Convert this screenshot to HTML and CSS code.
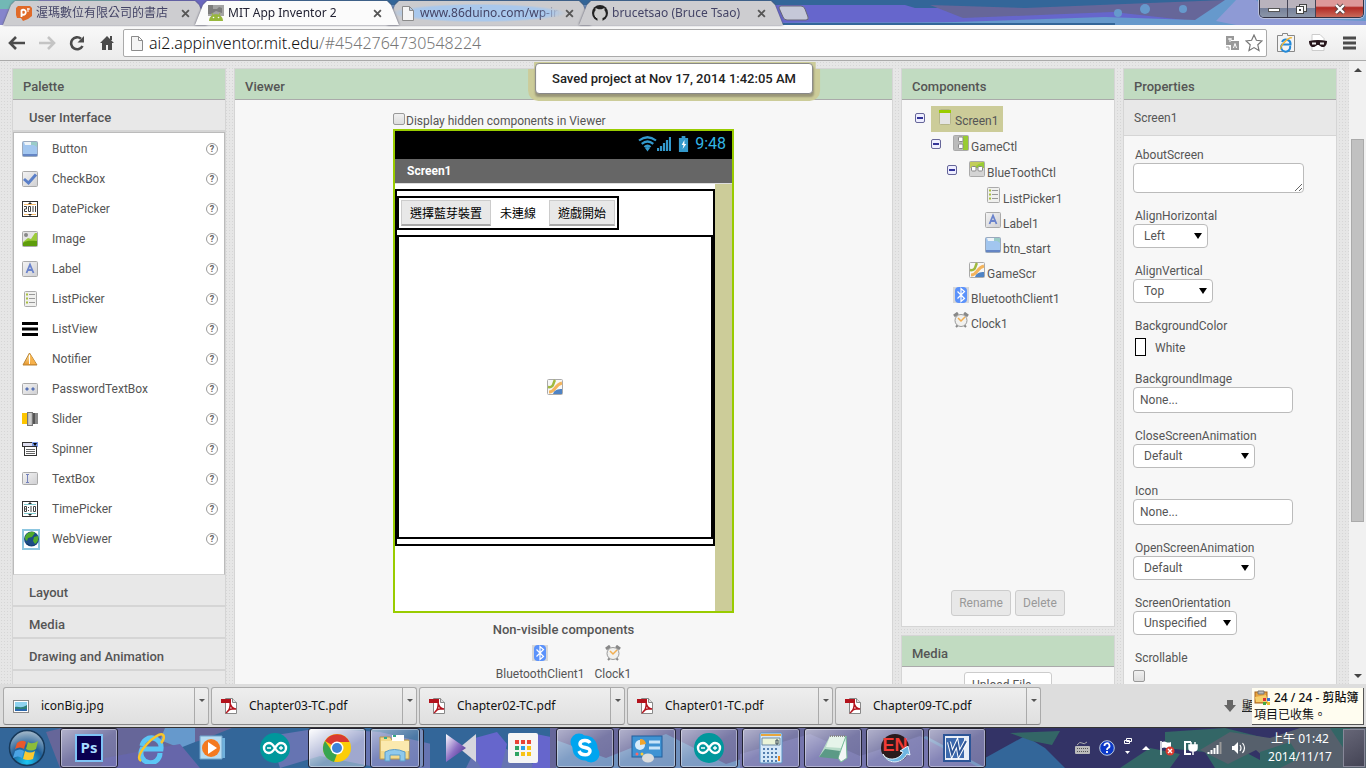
FILE: index.html
```html
<!DOCTYPE html>
<html lang="en">
<head>
<meta charset="utf-8">
<title>MIT App Inventor 2</title>
<link rel="stylesheet" href="styles.css">
</head>
<body>
<svg class="sprite" aria-hidden="true">
  <defs>
    <linearGradient id="gGrey" x1="0" y1="0" x2="1" y2="1"><stop offset="0" stop-color="#f4f4f4"/><stop offset="1" stop-color="#cfcfd2"/></linearGradient>
    <linearGradient id="gOrange" x1="0" y1="0" x2="0" y2="1"><stop offset="0" stop-color="#fff0b0"/><stop offset="1" stop-color="#e9962a"/></linearGradient>
    <radialGradient id="gOrb" cx=".5" cy=".9" r=".9"><stop offset="0" stop-color="#19c8f5"/><stop offset=".5" stop-color="#1f5f99"/><stop offset="1" stop-color="#a9bccb"/></radialGradient>
    <linearGradient id="gVs" x1="0" y1="0" x2="1" y2="1"><stop offset="0" stop-color="#fff"/><stop offset=".5" stop-color="#8c6fc4"/><stop offset="1" stop-color="#3a2080"/></linearGradient>
  </defs>
  <symbol id="i-button" viewBox="0 0 16 16"><rect x=".5" y=".5" width="15" height="15" rx="1" fill="#a2c6ef" stroke="#9aa9bd"/><path d="M9 1h6v5l-3-2H9z" fill="#9accc8"/><path d="M2 1h7v3H3z" fill="#eef4f8"/><path d="M1 14h14" stroke="#6485c4" stroke-width="2"/></symbol>
  <symbol id="i-check" viewBox="0 0 16 16"><rect x=".5" y=".5" width="15" height="15" rx="1" fill="url(#gGrey)" stroke="#aaa"/><path d="M2 8l4.500 4L14 3.500" fill="none" stroke="#5a7fc8" stroke-width="3"/></symbol>
  <symbol id="i-date" viewBox="0 0 16 16"><rect x=".5" y=".5" width="15" height="15" fill="#fff" stroke="#333"/><path d="M2 3.500h12M2 13.500h12" stroke="#f2b86a"/><path d="M6 3l2-2 2 2zM6 13l2 2 2-2z" fill="#222"/><path d="M2 5.500h2.500v2.500H2.500v2.500H5M6.500 5.500h2v5h-2zM11 5v6M13.500 5v6" fill="none" stroke="#444"/></symbol>
  <symbol id="i-image" viewBox="0 0 16 16"><rect x=".5" y=".5" width="15" height="15" rx="1" fill="#e4e4e4" stroke="#aaa"/><circle cx="4" cy="4" r="2" fill="#888"/><path d="M1 11L6 7l3 1 4-6h2v13H1z" fill="#9ccb3b"/><path d="M1 12c4-3 8-2 14-2v5H1z" fill="#5e9d0c"/></symbol>
  <symbol id="i-label" viewBox="0 0 16 16"><rect x=".5" y=".5" width="15" height="15" rx="1" fill="url(#gGrey)" stroke="#aaa"/><path d="M4.500 12L8 3.500 11.500 12M5.500 9h5" fill="none" stroke="#6a83cc" stroke-width="1.800"/></symbol>
  <symbol id="i-list" viewBox="0 0 16 16"><rect x="2.500" y=".5" width="12" height="15" rx="1" fill="#f0f0ee" stroke="#aaa"/><path d="M7 3.500h6M7 7.500h6M7 11.500h6" stroke="#999"/><path d="M4 3.500h2M4 7.500h2M4 11.500h2" stroke="#a9c040" stroke-width="2"/></symbol>
  <symbol id="i-listview" viewBox="0 0 16 16"><path d="M0 2.500h16M0 8h16M0 13.500h16" stroke="#000" stroke-width="3"/></symbol>
  <symbol id="i-notifier" viewBox="0 0 16 16"><path d="M7.500 2L15 14H1z" fill="url(#gOrange)" stroke="#b98336"/><path d="M7.500 4v9" stroke="#fff" stroke-width="1"/><path d="M8 3l6 10H9z" fill="#f7b24b"/></symbol>
  <symbol id="i-password" viewBox="0 0 16 16"><rect x=".5" y="2.500" width="15" height="11" rx="1" fill="url(#gGrey)" stroke="#aaa"/><path d="M3 8h4M5 6v4M9 8h4M11 6v4M4 7l2 2M6 7l-2 2M10 7l2 2M12 7l-2 2" stroke="#5973b5"/></symbol>
  <symbol id="i-slider" viewBox="0 0 16 16"><path d="M0 2h6v11H0z" fill="#fdc500"/><path d="M10 2h6v11h-6z" fill="#555"/><path d="M13 2h3v11h-3z" fill="#888"/><rect x="5.500" y="1.500" width="5" height="13" fill="#bbb" stroke="#777"/><path d="M8 2v12" stroke="#ddd"/></symbol>
  <symbol id="i-spinner" viewBox="0 0 16 16"><rect x=".5" y="1.500" width="15" height="4" fill="#dde" stroke="#333"/><path d="M10 1h6v5h-6z" fill="#7b9be8"/><path d="M11 2h4l-2 3z" fill="#000"/><rect x="2.500" y="5.500" width="12" height="9" fill="#fff" stroke="#333"/><path d="M4 8.500h9M4 10.500h9M4 12.500h9" stroke="#666"/></symbol>
  <symbol id="i-textbox" viewBox="0 0 16 16"><rect x=".5" y="1.500" width="15" height="12" rx="1" fill="url(#gGrey)" stroke="#aaa"/><path d="M4 3.500h3M4 11.500h3M5.500 3.500v8" stroke="#7582bb"/></symbol>
  <symbol id="i-time" viewBox="0 0 16 16"><rect x=".5" y=".5" width="15" height="15" fill="#fff" stroke="#333"/><path d="M2 3.500h12M2 12.500h12" stroke="#7fc8cc"/><path d="M6 3l2-2 2 2zM6 13l2 2 2-2z" fill="#222"/><path d="M2.500 5.500h2v5h-2zM2.500 8h2M6.500 6v1M6.500 9v1M9 5v6M11.500 5.500h2v5h-2z" fill="none" stroke="#444"/></symbol>
  <symbol id="i-web" viewBox="0 0 18 21"><rect x="1" y="1" width="16" height="19" fill="#fff" stroke="#8cc6e0" stroke-width="2"/><circle cx="9.500" cy="10" r="7.500" fill="#1b4c86"/><path d="M4 6c3-4 8-4 9-2l-3 4-4 1-1 3c-3-2-2-4-1-6zM12 8l4-1c1 4-1 7-3 8l-2-3z" fill="#4faa2c"/><path d="M4 14c3 4 9 4 12-2-1 3-4 5-7 5z" fill="#0c1f3a"/></symbol>
  <symbol id="i-screen" viewBox="0 0 16 16"><rect x="2.500" y=".5" width="11" height="15" rx="1" fill="#e4e4e4" stroke="#b5b58a"/><path d="M2 2.500h12" stroke="#9c0" stroke-width="3"/></symbol>
  <symbol id="i-vert" viewBox="0 0 16 16"><rect x=".5" y=".5" width="15" height="15" rx="1" fill="#bbb" stroke="#aaa"/><path d="M10 1h5v14h-5z" fill="#9c3"/><rect x="5.500" y="2" width="4.500" height="4.500" rx="1" fill="#fff" stroke="#888"/><rect x="5.500" y="9" width="4.500" height="4.500" rx="1" fill="#fff" stroke="#888"/></symbol>
  <symbol id="i-horiz" viewBox="0 0 16 16"><rect x=".5" y=".5" width="15" height="15" rx="1" fill="#d4d4d4" stroke="#aaa"/><path d="M1 1h14v6H1z" fill="#c3cd5a"/><path d="M5 7c2-3 6-5 10-6v6z" fill="#9c3"/><rect x="2.500" y="5.500" width="4.500" height="4.500" rx="1" fill="#fff" stroke="#888"/><rect x="9" y="5.500" width="4.500" height="4.500" rx="1" fill="#fff" stroke="#888"/></symbol>
  <symbol id="i-canvas" viewBox="0 0 16 16"><rect x=".5" y=".5" width="15" height="15" rx="1" fill="#f7f7f7" stroke="#aaa"/><path d="M1 8c6 1 5-4 7-7" fill="none" stroke="#9fb93e" stroke-width="2.500"/><path d="M2 13c7 0 5-7 13-9" fill="none" stroke="#f4b45c" stroke-width="3"/><path d="M6 15c1-4 5-5 9-5v5z" fill="#4f83c4"/></symbol>
  <symbol id="i-bt" viewBox="0 0 16 16"><path d="M0 0h16v16H0z" fill="#d8d8d8"/><rect x="2" y="0" width="12" height="16" rx="4" fill="#5b92fb"/><path d="M4.500 4.500l7 7L8 14.500v-13l3.500 3-7 7" fill="none" stroke="#fff" stroke-width="1.200"/></symbol>
  <symbol id="i-clock" viewBox="0 0 16 16"><path d="M1 4l4-3M11 1l4 3" stroke="#888" stroke-width="3"/><path d="M3 15l2-2M13 15l-2-2" stroke="#888" stroke-width="2"/><circle cx="8" cy="8.500" r="6" fill="#f1f1ef" stroke="#999"/><path d="M5 6l3 3 4-4" fill="none" stroke="#f2ae51" stroke-width="1.500"/></symbol>
  <symbol id="i-page" viewBox="0 0 12 16"><path d="M.5 1.500h7l4 4v10H.5zM7.500 1.500v4h4" fill="#f4f4f4" stroke="#8b8b8b"/></symbol>
  <symbol id="i-close" viewBox="0 0 8 8"><path d="M1 1l6 6M7 1L1 7" stroke="#555" stroke-width="1.600"/></symbol>
  <symbol id="i-pdf" viewBox="0 0 16 16"><path d="M4.500.5h7l4 4v11h-11z" fill="#fff" stroke="#888"/><path d="M11.500.5v4h4" fill="#ddd" stroke="#888"/><path d="M0 1h10v4H0z" fill="#b3121c"/><path d="M9 5c1 4 3 6 6 6-4-1-8 1-9 3 2-1 4-6 3-9z" fill="none" stroke="#b3121c" stroke-width="1.500"/></symbol>
  <symbol id="i-jpg" viewBox="0 0 16 16"><rect x=".5" y="2.500" width="15" height="12" fill="#fff" stroke="#888"/><path d="M2 4h12v9H2z" fill="#8fd3ef"/><path d="M2 9c4-1 6 2 12-2v6H2z" fill="#2d7f79"/><path d="M2 11h12v2H2z" fill="#2a67ad"/></symbol>
  <symbol id="i-arduino" viewBox="0 0 30 30"><circle cx="15" cy="15" r="15" fill="#00979c"/><path d="M15 15c-2-3.500-4-5-6-5a5 5 0 0 0 0 10c2 0 4-1.500 6-5c2-3.500 4-5 6-5a5 5 0 0 1 0 10c-2 0-4-1.500-6-5z" fill="none" stroke="#fff" stroke-width="2.400"/><path d="M7 15h4M19 15h4M21 13v4" stroke="#fff" stroke-width="1.300"/></symbol>
</svg>

<header class="tabstrip">
  <svg class="mosaic" viewBox="0 0 1366 25" preserveAspectRatio="none" aria-hidden="true">
    <path d="M0 0h1366v25H0z" fill="#369"/><path d="M0 0h200v25H0z" fill="#8685cc"/><path d="M0 0h40l-20 9H0zM70 0h50l30 8H80z" fill="#72b8b5"/><path d="M130 0h110v25H130z" fill="#6a67c0"/><path d="M380 5h210l20 20H390z" fill="#6b92c6"/>
    <path d="M775 5h130l10 3h330v17H775z" fill="#66c"/><path d="M930 5l95 3 200-8 18 16-40 6-90-10-150 6z" fill="#669"/><path d="M775 23c50-1 100 0 180-1l150-5 90 3 30-20h141v25H775z" fill="#69c"/><path d="M1236 0h20l20 18 90 3v4h-130l-20-4z" fill="#8e9ad5"/><path d="M775 23h340v2H775z" fill="#369"/><circle cx="1118" cy="13" r="4" fill="#69c"/><circle cx="1145" cy="9" r="5" fill="#69c"/><circle cx="1183" cy="9" r="4" fill="#69c"/>
  </svg>
  <nav class="tabs" aria-label="Tabs">
    <div class="tab">
      <svg class="ic16" viewBox="0 0 16 16"><path d="M2 1h12l2 2v8l-4 3-5 2-2-3H1L0 10V3z" fill="#e06a28"/><path d="M5.500 12V5.500a2.500 2.500 0 110 3.500" fill="none" stroke="#fff" stroke-width="1.800"/><path d="M12 3v4M11 4h3" stroke="#fff"/></svg>
      <span class="tab-title">渥瑪數位有限公司的書店</span>
      <button class="tab-close" aria-label="Close tab"><svg class="ic8"><use href="#i-close"/></svg></button>
    </div>
    <div class="tab active">
      <svg class="ic16" viewBox="0 0 16 16"><path d="M0 0h16v11H0z" fill="#a4a4a4"/><path d="M0 0h5v4h4l2-2 3 1v5L8 6 3 9H0z" fill="#7d7d7d"/><path d="M1 16c0-9 14-9 14 0z" fill="#97b73c"/><path d="M4 8l1 2M12 8l-1 2" stroke="#97b73c"/><circle cx="5.500" cy="12.500" r=".8" fill="#fff"/><circle cx="10.500" cy="12.500" r=".8" fill="#fff"/></svg>
      <span class="tab-title">MIT App Inventor 2</span>
      <button class="tab-close" aria-label="Close tab"><svg class="ic8"><use href="#i-close"/></svg></button>
    </div>
    <div class="tab glass">
      <svg class="ic16"><use href="#i-page"/></svg>
      <span class="tab-title">www.86duino.com/wp-in</span>
      <button class="tab-close" aria-label="Close tab"><svg class="ic8"><use href="#i-close"/></svg></button>
    </div>
    <div class="tab">
      <svg class="ic16" viewBox="0 0 16 16"><circle cx="8" cy="8" r="8" fill="#222"/><path d="M5.500 16v-3c-4-1-4-6-2-7.500L3.500 3l3 1.200h3L12.500 3v2.500c2 2 2 6.500-2 7.500v3z" fill="#ccc"/><path d="M3 11l2.500 2.500" stroke="#ccc"/></svg>
      <span class="tab-title">brucetsao (Bruce Tsao)</span>
      <button class="tab-close" aria-label="Close tab"><svg class="ic8"><use href="#i-close"/></svg></button>
    </div>
    <button class="newtab" aria-label="New tab"><svg viewBox="0 0 32 16" width="32" height="16"><path d="M3 1h20q3 0 4 3l3 8q1 3-2 3H9q-3 0-4-3L1 3q0-2 2-2z" fill="#c5c8d8" stroke="#667"/></svg></button>
  </nav>
  <div class="winbtns">
    <button class="wb" aria-label="Minimize"><svg width="14" height="10" viewBox="0 0 14 10"><rect x="1.500" y="4.500" width="11" height="3" fill="#fff" stroke="#555"/></svg></button>
    <button class="wb" aria-label="Restore"><svg width="14" height="12" viewBox="0 0 14 12"><rect x="4.500" y="1.500" width="7" height="7" fill="#eee" stroke="#444"/><rect x="1.500" y="3.500" width="7" height="7" fill="#fff" stroke="#444"/><rect x="4" y="6" width="2" height="2" fill="#444"/></svg></button>
    <button class="wb wb-close" aria-label="Close"><svg width="14" height="12" viewBox="0 0 14 12"><path d="M3 2l8 8M11 2l-8 8" stroke="#544" stroke-width="4"/><path d="M3 2l8 8M11 2l-8 8" stroke="#fff" stroke-width="2.400"/></svg></button>
  </div>
</header>

<div class="toolbar">
  <button class="tool" aria-label="Back"><svg width="18" height="16" viewBox="0 0 18 16"><path d="M2 8h15M8 2L2 8l6 6" fill="none" stroke="#4b4b4b" stroke-width="2.600"/></svg></button>
  <button class="tool" aria-label="Forward"><svg width="18" height="16" viewBox="0 0 18 16"><path d="M1 8h15M10 2l6 6-6 6" fill="none" stroke="#c4c4c4" stroke-width="2.600"/></svg></button>
  <button class="tool" aria-label="Reload"><svg width="18" height="16" viewBox="0 0 18 16"><path d="M14.500 11A6 6 0 1113 3.700" fill="none" stroke="#4b4b4b" stroke-width="2.600"/><path d="M16 1v6.500H9.500z" fill="#4b4b4b"/></svg></button>
  <button class="tool" aria-label="Home"><svg width="18" height="16" viewBox="0 0 18 16"><path d="M9 1l7 7h-2v7h-4v-5H8v5H4V8H2zM12 1h2v4h-2z" fill="#4b4b4b"/></svg></button>
  <div class="omnibox">
    <svg class="pageic"><use href="#i-page"/></svg>
    <span class="url">ai2.appinventor.mit.edu<span class="path">/#4542764730548224</span></span>
    <svg width="14" height="14" viewBox="0 0 14 14"><path d="M1 0h8v4H6v5H1zM6 5h8v9H6z" fill="#999"/><path d="M3 3h4M5 2v4M8.500 12L10 7.500 11.500 12" fill="none" stroke="#fff"/><path d="M1 11h3v3" fill="none" stroke="#999"/></svg>
    <button class="star" aria-label="Bookmark"><svg width="18" height="18" viewBox="0 0 18 18"><path d="M9 1l2.400 5.300 5.600.600-4.200 3.900 1.200 5.700-5-2.900-5 2.900 1.200-5.700L1 6.900l5.600-.6z" fill="#fff" stroke="#777" stroke-width="1.200"/></svg></button>
  </div>
  <button class="ext" aria-label="IE Tab"><svg width="20" height="20" viewBox="0 0 20 20"><path d="M1.500 2.500h5v-2h5v2h7v16h-17z" fill="#f4f4f4" stroke="#888"/><path d="M14 13A4.500 4.500 0 116 11.500h8.500A4.500 4.500 0 006 9" fill="none" stroke="#2289d8" stroke-width="2"/><path d="M5 16C3 14 13 3 16 5" fill="none" stroke="#f2b632" stroke-width="1.400"/></svg></button>
  <button class="ext" aria-label="Mask"><svg width="20" height="20" viewBox="0 0 20 20"><path d="M4 1.500h8l4 4v12H4z" fill="#fff" stroke="#ccc"/><path d="M1 8q9-2 18 0c0 4-2 6-4 6-3 0-3-2-5-2s-2 2-5 2c-2 0-4-2-4-6z" fill="#27161c"/><path d="M4 10.500h4M12 10.500h4" stroke="#eee" stroke-width="1.800"/></svg></button>
  <button class="ext" aria-label="Menu"><svg width="14" height="14" viewBox="0 0 14 14"><path d="M0 2h13M0 7h13M0 12h13" stroke="#4b4b4b" stroke-width="3"/></svg></button>
</div>

<div class="page">
  <main class="columns">
    <section class="panel">
      <h2 class="panel-head">Palette</h2>
      <h3 class="cat">User Interface</h3>
      <ul class="items">
        <li><svg class="ic16"><use href="#i-button"/></svg><span>Button</span><button class="help" aria-label="Help">?</button></li>
        <li><svg class="ic16"><use href="#i-check"/></svg><span>CheckBox</span><button class="help" aria-label="Help">?</button></li>
        <li><svg class="ic16"><use href="#i-date"/></svg><span>DatePicker</span><button class="help" aria-label="Help">?</button></li>
        <li><svg class="ic16"><use href="#i-image"/></svg><span>Image</span><button class="help" aria-label="Help">?</button></li>
        <li><svg class="ic16"><use href="#i-label"/></svg><span>Label</span><button class="help" aria-label="Help">?</button></li>
        <li><svg class="ic16"><use href="#i-list"/></svg><span>ListPicker</span><button class="help" aria-label="Help">?</button></li>
        <li><svg class="ic16"><use href="#i-listview"/></svg><span>ListView</span><button class="help" aria-label="Help">?</button></li>
        <li><svg class="ic16"><use href="#i-notifier"/></svg><span>Notifier</span><button class="help" aria-label="Help">?</button></li>
        <li><svg class="ic16"><use href="#i-password"/></svg><span>PasswordTextBox</span><button class="help" aria-label="Help">?</button></li>
        <li><svg class="ic16"><use href="#i-slider"/></svg><span>Slider</span><button class="help" aria-label="Help">?</button></li>
        <li><svg class="ic16"><use href="#i-spinner"/></svg><span>Spinner</span><button class="help" aria-label="Help">?</button></li>
        <li><svg class="ic16"><use href="#i-textbox"/></svg><span>TextBox</span><button class="help" aria-label="Help">?</button></li>
        <li><svg class="ic16"><use href="#i-time"/></svg><span>TimePicker</span><button class="help" aria-label="Help">?</button></li>
        <li><svg class="webic"><use href="#i-web"/></svg><span>WebViewer</span><button class="help" aria-label="Help">?</button></li>
      </ul>
      <h3 class="cat">Layout</h3>
      <h3 class="cat">Media</h3>
      <h3 class="cat">Drawing and Animation</h3>
      <h3 class="cat">Sensors</h3>
    </section>

    <section class="panel">
      <h2 class="panel-head">Viewer</h2>
      <div class="viewer">
        <div class="device">
          <label class="hidden-opt"><input type="checkbox" class="tick">Display hidden components in Viewer</label>
          <div class="phone">
            <div class="status">
              <svg width="19" height="16" viewBox="0 0 19 16"><path d="M1 4.500q8.500-6.500 17 0M3.700 7.800q5.800-4.600 11.600 0M6.400 11q3.100-2.500 6.200 0" fill="none" stroke="#3399cc" stroke-width="2.200"/><path d="M7 12q2.500-2 5 0l-2.500 3.500z" fill="#39c"/></svg>
              <svg width="14" height="16" viewBox="0 0 14 16"><path d="M1 15v-3M4 15v-5M7 15V7M10 15V4M13 15V1" stroke="#39c" stroke-width="2.200"/></svg>
              <svg class="battery" width="11" height="16" viewBox="0 0 12 16" preserveAspectRatio="none"><path d="M1 2h3V0h4v2h3v14H1z" fill="#39c"/><path d="M7 4L4 9h2l-1 4 4-5H7z" fill="#fff"/></svg>
              <span>9:48</span>
            </div>
            <div class="apptitle">Screen1</div>
            <div class="screen">
              <div class="gamectl">
                <div class="btctl">
                  <button class="mock">選擇藍芽裝置</button>
                  <span class="mocklabel">未連線</span>
                  <button class="mock">遊戲開始</button>
                </div>
                <div class="gamescr"><svg class="ic16"><use href="#i-canvas"/></svg></div>
              </div>
              <div class="strip"></div>
            </div>
          </div>
        </div>
        <h3 class="nonvis">Non-visible components</h3>
        <div class="nonvis-list">
          <figure><svg class="ic16"><use href="#i-bt"/></svg><figcaption>BluetoothClient1</figcaption></figure>
          <figure><svg class="ic16"><use href="#i-clock"/></svg><figcaption>Clock1</figcaption></figure>
        </div>
      </div>
    </section>

    <div class="stack">
      <section class="panel">
        <h2 class="panel-head">Components</h2>
        <ul class="tree">
          <li><div class="row"><button class="exp" aria-label="Collapse"></button><span class="node sel"><svg class="ic16"><use href="#i-screen"/></svg>Screen1</span></div>
            <ul>
              <li><div class="row"><button class="exp" aria-label="Collapse"></button><span class="node"><svg class="ic16"><use href="#i-vert"/></svg>GameCtl</span></div>
                <ul>
                  <li><div class="row"><button class="exp" aria-label="Collapse"></button><span class="node"><svg class="ic16"><use href="#i-horiz"/></svg>BlueToothCtl</span></div>
                    <ul>
                      <li><div class="row leaf"><span class="node"><svg class="ic16"><use href="#i-list"/></svg>ListPicker1</span></div></li>
                      <li><div class="row leaf"><span class="node"><svg class="ic16"><use href="#i-label"/></svg>Label1</span></div></li>
                      <li><div class="row leaf"><span class="node"><svg class="ic16"><use href="#i-button"/></svg>btn_start</span></div></li>
                    </ul>
                  </li>
                  <li><div class="row leaf"><span class="node"><svg class="ic16"><use href="#i-canvas"/></svg>GameScr</span></div></li>
                </ul>
              </li>
              <li><div class="row leaf"><span class="node"><svg class="ic16"><use href="#i-bt"/></svg>BluetoothClient1</span></div></li>
              <li><div class="row leaf"><span class="node"><svg class="ic16"><use href="#i-clock"/></svg>Clock1</span></div></li>
            </ul>
          </li>
        </ul>
        <div class="actions"><button class="btn" disabled>Rename</button><button class="btn" disabled>Delete</button></div>
      </section>
      <section class="panel">
        <h2 class="panel-head">Media</h2>
        <div class="upload"><button class="btn white">Upload File ...</button></div>
      </section>
    </div>

    <section class="panel">
      <h2 class="panel-head">Properties</h2>
      <div class="target">Screen1</div>
      <form class="props">
        <div class="prop"><label for="about">AboutScreen</label><textarea id="about"></textarea></div>
        <div class="prop"><label for="ah">AlignHorizontal</label><span class="pick w-s"><select id="ah"><option>Left</option></select></span></div>
        <div class="prop"><label for="av">AlignVertical</label><span class="pick w-m"><select id="av"><option>Top</option></select></span></div>
        <div class="prop"><label for="bg">BackgroundColor</label><button type="button" id="bg" class="color"><i></i>White</button></div>
        <div class="prop"><label for="bi">BackgroundImage</label><input id="bi" class="field" type="text" value="None..." readonly></div>
        <div class="prop"><label for="ca">CloseScreenAnimation</label><span class="pick w-xl"><select id="ca"><option>Default</option></select></span></div>
        <div class="prop"><label for="ic">Icon</label><input id="ic" class="field" type="text" value="None..." readonly></div>
        <div class="prop"><label for="oa">OpenScreenAnimation</label><span class="pick w-xl"><select id="oa"><option>Default</option></select></span></div>
        <div class="prop"><label for="so">ScreenOrientation</label><span class="pick w-l"><select id="so"><option>Unspecified</option></select></span></div>
        <div class="prop"><label for="sc">Scrollable</label><input id="sc" type="checkbox" class="tick spaced"></div>
      </form>
    </section>
  </main>
  <div class="scrollbar"><span class="arrow up"></span><span class="before"></span><span class="thumb"></span><span class="after"></span><span class="arrow down"></span></div>
  <div class="toast" role="status">Saved project at Nov 17, 2014 1:42:05 AM</div>
</div>

<div class="downloads">
  <div class="dl"><button class="file"><svg class="ic16"><use href="#i-jpg"/></svg>iconBig.jpg</button><button class="more" aria-label="Options"></button></div>
  <div class="dl"><button class="file"><svg class="ic16"><use href="#i-pdf"/></svg>Chapter03-TC.pdf</button><button class="more" aria-label="Options"></button></div>
  <div class="dl"><button class="file"><svg class="ic16"><use href="#i-pdf"/></svg>Chapter02-TC.pdf</button><button class="more" aria-label="Options"></button></div>
  <div class="dl"><button class="file"><svg class="ic16"><use href="#i-pdf"/></svg>Chapter01-TC.pdf</button><button class="more" aria-label="Options"></button></div>
  <div class="dl"><button class="file"><svg class="ic16"><use href="#i-pdf"/></svg>Chapter09-TC.pdf</button><button class="more" aria-label="Options"></button></div>
  <div class="showall"><svg width="12" height="12" viewBox="0 0 12 12"><path d="M3 0h6v5h3l-6 7-6-7h3z" fill="#666"/></svg><a href="#">顯</a></div>
  <div class="clip"><div><svg class="ic16" viewBox="0 0 16 16"><rect x="1" y="3" width="12" height="11" fill="#e8a33d" stroke="#a8641a"/><path d="M4 2h6v3H4z" fill="#bbb" stroke="#777"/><path d="M1 8l11-2 2 7H2z" fill="#f7cf6b"/><path d="M9 9h3v3H9z" fill="#d33"/><path d="M13 9h3v3h-3z" fill="#3a6fd0"/><path d="M9 13h3v3H9z" fill="#4a4"/><path d="M13 13h3v3h-3z" fill="#e8c02a"/></svg><b>24 / 24 - 剪貼簿</b></div><p>項目已收集。</p></div>
</div>

<footer class="taskbar">
  <svg class="mosaic" viewBox="0 0 1366 40" preserveAspectRatio="none" aria-hidden="true">
    <path d="M0 0h1366v40H0z" fill="#369"/><path d="M46 4l16-4h170l-30 12-50 14-40 14H60z" fill="#669"/><path d="M165 0h30v14l-15 6-20-8z" fill="#69c"/><path d="M105 30l75-14 20 24H100z" fill="#66a"/><path d="M270 8l50-8 60 4 60 14 40-12 60 34H380l-60-12-40 12z" fill="#6674b2"/><path d="M430 0h60l-14 20-10 20h-36z" fill="#369"/><path d="M475 10l22-6 10 12-6 24h-20l-8-14zM536 6l20 4v30h-24z" fill="#66c"/><path d="M550 0h440v40H550z" fill="#669"/><path d="M556 12l50 18 60-24 60 30 80-26 60 28 60-30 60 32H556z" fill="#6e90bd"/><path d="M740 26l70-20 50 22 60-20 60 32H740z" fill="#7474ad"/>
    <path d="M985 0h381v40H985z" fill="#336"/><path d="M985 30l40-22 20 12 20 20h-80z" fill="#369"/><path d="M1010 5l50-2 -8 14-20-4zM1165 4l60-4 40 10-20 14 30 16h-60l-10-16-40-4z" fill="#366"/><path d="M1200 22l30-18 40 6 30-10h66v40h-90l-20-18-28 14z" fill="#56606c"/><path d="M1260 24l30-10 10 16-20 10h-20zM1330 0h20v30z" fill="#366"/><path d="M1120 40l30-20 30 6-10 14z" fill="#366"/>
  </svg>
  <button class="start" aria-label="Start"><svg width="38" height="38" viewBox="0 0 38 38"><circle cx="19" cy="19" r="17.500" fill="url(#gOrb)" stroke="#17395a" stroke-width="1.500"/><path d="M9 14q5-4 9-1l-2 7q-4-3-9 0z" fill="#e8582b"/><path d="M20 13q4 3 10-1l-2 8q-5 3-10 0z" fill="#8cbd3a"/><path d="M7 22q5-3 9 0l-2 7q-4-3-9 0z" fill="#4ba3e4"/><path d="M17 22q5 3 10 0l-2 8q-5 2-10 0z" fill="#fbc930"/></svg></button>
  <nav class="apps" aria-label="Taskbar">
    <button class="app run" aria-label="Photoshop"><span class="ps">Ps</span></button>
    <button class="app" aria-label="Internet Explorer"><svg width="32" height="32" viewBox="0 0 32 32"><path d="M25 21A9.500 9.500 0 117 17h19A9.500 9.500 0 007 14" fill="none" stroke="#5cc6f5" stroke-width="5"/><path d="M6 29C-3 24 23-2 28 3c2 2 0 6-2 8" fill="none" stroke="#f8c52c" stroke-width="2.500"/></svg></button>
    <button class="app" aria-label="Media Player"><svg width="28" height="26" viewBox="0 0 28 26"><path d="M8 3h18v20H8z" fill="#6fb1dd"/><path d="M1 1h22v23H1z" fill="#b6dcf2" stroke="#6fa4cc"/><circle cx="12" cy="13" r="9" fill="#f47a20"/><path d="M9 7l9 6-9 6z" fill="#fff"/></svg></button>
    <button class="app" aria-label="Arduino"><svg width="30" height="30"><use href="#i-arduino"/></svg></button>
    <button class="app run lit" aria-label="Chrome"><svg width="30" height="30" viewBox="0 0 30 30"><circle cx="15" cy="15" r="14" fill="#fbcd08"/><path d="M15 15L3 8A14 14 0 0127.500 9H15z" fill="#d93a32"/><path d="M3 8l7 10 5 3-3 8A14 14 0 013 8z" fill="#37a451"/><circle cx="15" cy="15" r="6.500" fill="#fff"/><circle cx="15" cy="15" r="5" fill="#3d83d9"/></svg></button>
    <button class="app run stacked" aria-label="Explorer"><svg width="34" height="32" viewBox="0 0 34 32"><path d="M2 5h10l2 3h17v19H2z" fill="#f3d98b" stroke="#b99a4a"/><path d="M14 3h12v6H14z" fill="#fff"/><path d="M3 9h28v10H3z" fill="#fbe9ae"/><path d="M15 4h3M6 6h3" stroke="#3a8" stroke-width="2"/><path d="M7 29V20q9-5 20 0v9h-5v-6H12v6z" fill="#8fc9ec" stroke="#5a9cc9"/></svg></button>
    <button class="app" aria-label="KMPlayer"><svg width="32" height="28" viewBox="0 0 32 28"><path d="M31 0v28L14 14z" fill="#d6d6de"/><path d="M1 0l20 14L1 28z" fill="url(#gVs)"/></svg></button>
    <button class="app" aria-label="App Launcher"><svg width="30" height="30" viewBox="0 0 30 30"><rect width="30" height="30" rx="2" fill="#f5f5f5"/><path d="M7 7h4v4H7zM13 7h4v4h-4zM19 7h4v4h-4z" fill="#ea4335"/><path d="M7 13h4v4H7zM7 19h4v4H7z" fill="#2fa463"/><path d="M13 13h4v4h-4z" fill="#2b9fe8"/><path d="M13 19h4v4h-4zM19 19h4v4h-4zM19 13h4v4h-4z" fill="#f8c316"/></svg></button>
    <button class="app run" aria-label="Skype"><svg width="30" height="30" viewBox="0 0 30 30"><circle cx="15" cy="15" r="12.500" fill="#00a5ef"/><circle cx="9" cy="9" r="8.500" fill="#00a5ef"/><circle cx="21" cy="21" r="8.500" fill="#00a5ef"/><path d="M20 10c-2-4-10-3-10 1 0 5 10 2 10 7 0 5-9 5-11 0" fill="none" stroke="#fff" stroke-width="3.500"/></svg></button>
    <button class="app run" aria-label="Control Panel"><svg width="32" height="30" viewBox="0 0 32 30"><rect x="1" y="3" width="30" height="21" fill="#3f93d3" stroke="#225f9c"/><circle cx="9" cy="12" r="5" fill="#d8ecfa"/><path d="M9 12V6a6 6 0 016 5z" fill="#f3a52c"/><path d="M18 9h11M18 15h11" stroke="#c8e4f8" stroke-width="3"/><circle cx="6" cy="21" r="1.500" fill="#f66"/><circle cx="11" cy="21" r="1.500" fill="#fc3"/><ellipse cx="17" cy="25" rx="6" ry="4.500" fill="#ddd"/></svg></button>
    <button class="app run" aria-label="Arduino IDE"><svg width="30" height="30"><use href="#i-arduino"/></svg></button>
    <button class="app run" aria-label="Calculator"><svg width="24" height="32" viewBox="0 0 24 32"><rect x="1" y="1" width="22" height="30" rx="1" fill="#d5e8f8" stroke="#5c94c6"/><path d="M2 3h20" stroke="#e7a63d" stroke-width="2"/><path d="M3 6h18v7H3z" fill="#eaf4d8" stroke="#6c8ba5"/><path d="M17 8h2v4h-2z" fill="none" stroke="#345"/><path d="M4 17h16M4 21h16M4 25h16M4 29h16" stroke="#547fae" stroke-width="2" stroke-dasharray="2 2"/><path d="M19 24h2v5h-2z" fill="#ef8d24"/></svg></button>
    <button class="app run" aria-label="Notepad"><svg width="30" height="30" viewBox="0 0 30 30"><path d="M12 3h16l-6 21-21 0z" fill="#b8dcc9"/><path d="M12 3h16l-5 12-15-1z" fill="#e6f4ea"/><path d="M28 3l1 22-6 4-3-4z" fill="#f2f6f6" stroke="#7b9"/><path d="M1 24l6-8 15 2-2 8z" fill="#5b9a86"/><path d="M12 3h16" stroke="#888" stroke-width="2" stroke-dasharray="1 1"/></svg></button>
    <button class="app run" aria-label="EndNote"><span class="en">EN</span><svg class="swoosh" width="30" height="18" viewBox="0 0 30 18"><path d="M2 8c3 7 16 7 20-2l-3-1 8-5 2 9-3-1C20 19 6 18 2 8z" fill="#6fb6e2" stroke="#e5f4ff"/></svg></button>
    <button class="app run" aria-label="Word"><svg width="28" height="28" viewBox="0 0 28 28"><rect x="1" y="1" width="26" height="26" fill="#e8eef7" stroke="#2d5597" stroke-width="2"/><path d="M3 4h18v20H3z" fill="#3c69ad"/><path d="M6 8l3 12 5-11 2 11 7-13" fill="none" stroke="#fff" stroke-width="4"/><path d="M6 8l3 12 5-11 2 11 7-13" fill="none" stroke="#2d5597" stroke-width="2"/></svg></button>
  </nav>
  <div class="tray">
    <svg width="16" height="14" viewBox="0 0 16 14"><path d="M2 4q3-4 5-2t5-1" fill="none" stroke="#aaa"/><rect y="5" width="15" height="8" rx="1" fill="#bbb"/><path d="M2 7.500h12M2 10.500h12" stroke="#555" stroke-dasharray="1 1"/></svg>
    <svg width="16" height="16" viewBox="0 0 16 16"><circle cx="8" cy="8" r="7.300" fill="#0b38c8" stroke="#bcd"/><path d="M5.500 6a2.500 2.500 0 113.500 2q-1 .5-1 2M8 11v2" fill="none" stroke="#fff" stroke-width="1.800"/></svg>
    <svg width="10" height="22" viewBox="0 0 10 22"><path d="M3.500 1.500h5v3h-5zM1.500 3.500h5v3h-5z" fill="#336" stroke="#fff"/><path d="M2 14h5l-2.500 3z" fill="#fff"/></svg>
    <svg width="10" height="6" viewBox="0 0 8 6"><path d="M0 5l4-4 4 4z" fill="#fff"/></svg>
    <svg width="16" height="16" viewBox="0 0 16 16"><path d="M2 1v14" stroke="#fff" stroke-width="1.500"/><path d="M3 2c4-2 4 2 9 0v6c-4 2-5-2-9 0z" fill="#fff"/><circle cx="11" cy="11" r="4.500" fill="#dc3a2e"/><path d="M9 9l4 4M13 9l-4 4" stroke="#fff" stroke-width="1.400"/></svg>
    <svg width="16" height="16" viewBox="0 0 16 16"><path d="M8 2H2v12h6" fill="none" stroke="#fff" stroke-width="2"/><path d="M6 5h8v3q0 3-4 3t-4-3zM8 2v3M12 2v3M10 11v4" fill="#fff" stroke="#fff" stroke-width="1.500"/></svg>
    <svg width="16" height="14" viewBox="0 0 16 14"><path d="M1.500 13v-2M4.500 13v-4M7.500 13V7M10.500 13V4" stroke="#fff" stroke-width="2"/><path d="M13.500 13V1" stroke="#999" stroke-width="2"/></svg>
    <svg width="16" height="14" viewBox="0 0 16 14"><path d="M1 5h2l4-4v12L3 9H1z" fill="#fff"/><path d="M9 4q2 3 0 6M11.500 2q4 5 0 10" fill="none" stroke="#fff" stroke-width="1.200"/></svg>
  </div>
  <div class="time"><span>上午 01:42</span><span>2014/11/17</span></div>
  <button class="desk" aria-label="Show desktop"></button>
</footer>
</body>
</html>
```

FILE: styles.css
```css
* { box-sizing: border-box; }
body { margin: 0; height: 100vh; display: flex; flex-direction: column; overflow: hidden; font: 12px/16px Roboto, "Noto Sans CJK TC", sans-serif; color: #555; background: #e8e8e8; }
h2, h3, ul, p, figure { margin: 0; padding: 0; list-style: none; }
h2, h3 { font-size: 13px; }
button { border: 0; background: none; padding: 0; margin: 0; font: inherit; color: inherit; display: inline-flex; align-items: center; justify-content: center; }
svg { flex: none; display: block; }
.sprite { width: 0; height: 0; position: absolute; }
.ic16 { width: 16px; height: 16px; }
.ic8 { width: 9px; height: 9px; }
.mosaic { position: absolute; inset: 0; width: 100%; height: 100%; z-index: -1; }

/* browser frame */
.tabstrip { position: relative; z-index: 0; height: 25px; flex: none; display: flex; justify-content: space-between; font: 12px/16px "Noto Sans", "Noto Sans CJK TC", sans-serif; color: #446; }
.tabs { display: flex; align-items: flex-end; padding-left: 3px; }
.tab { position: relative; z-index: 0; width: 204px; height: 24px; margin-right: -12px; padding: 0 16px 0 13px; display: flex; align-items: center; gap: 4px; filter: drop-shadow(0 0 1px #556); }
.tab::before { content: ""; position: absolute; inset: 0; z-index: -1; background: #cdcdd0; clip-path: polygon(0 100%, 8px 4px, 12px 0, 192px 0, 196px 4px, 100% 100%); }
.tab.glass::before { background: radial-gradient(ellipse at 45% 50%, #a9c8ec 45%, transparent 55%) #cbcbce; }
.tab.active { z-index: 1; color: #223; }
.tab.active::before { background: #fbfbfb; }
.tab-title { flex: 1; white-space: nowrap; overflow: hidden; }
.tab.glass .tab-title { mask-image: linear-gradient(90deg, #000 85%, transparent); }
.tab-close { width: 12px; height: 12px; }
.newtab { align-self: center; margin-left: 7px; }
.winbtns { display: flex; height: 18px; margin-right: 2px; border: 1px solid #334; border-top: 0; border-radius: 0 0 5px 5px; overflow: hidden; box-shadow: 0 0 0 1px #b9c0dc; }
.wb { width: 28px; background: linear-gradient(#b9b3bd 45%, #77819a 50%, #8b96a8); border-right: 1px solid #445; }
.wb-close { width: 47px; border: 0; background: linear-gradient(#d99 0 35%, #b22a24 45%, #c86a5a); }
.toolbar { height: 36px; flex: none; display: flex; align-items: center; padding: 0 6px 0 8px; gap: 12px; background: linear-gradient(#f9f9f9, #ebebeb); border-bottom: 1px solid #aaa; }
.tool { width: 18px; height: 28px; }
.omnibox { flex: 1; height: 28px; margin-left: -5px; margin-right: -3px; display: flex; align-items: center; gap: 6px; padding: 0 3px 0 7px; background: #fff; border: 1px solid #aaa; border-radius: 2px; }
.pageic { width: 12px; height: 16px; }
.url { flex: 1; font: 300 16px/24px "Noto Sans", sans-serif; color: #111; }
.path { color: #777; }
.ext { min-width: 20px; height: 28px; }

/* page */
.page { position: relative; flex: 1; min-height: 0; display: flex; overflow: hidden; background: #e6e6e6 radial-gradient(circle, #d6d6d6 1px, transparent 1px) 0 0 / 3px 3px; }
.columns { flex: 1; min-width: 0; display: grid; grid-template-columns: 214px 1fr 214px 214px; grid-template-rows: 1fr; gap: 8px; padding: 7px 12px 0; }
.panel { background: #f7f7f7; border: 1px solid #d5d5d5; min-width: 0; }
.panel-head { height: 31px; padding: 4px 10px 0; line-height: 28px; font-weight: 500; background: #c1dbc1; border-bottom: 1px solid #aaa; }
.cat { height: 32px; padding: 6px 16px 0; line-height: 24px; font-weight: 500; background: #e8e8e8; border-bottom: 2px solid #d5d5d5; }
.items { padding: 1px 6px 20px 8px; background: #fff; border: 1px solid #bbb; border-bottom-color: #d5d5d5; }
.items li { height: 30px; display: flex; align-items: center; }
.items span { flex: 1; padding-left: 14px; }
.webic { width: 18px; height: 21px; margin-right: -2px; }
.help { width: 12px; height: 12px; border: 1px solid #999; border-radius: 50%; font-size: 9px; line-height: 10px; font-weight: 700; color: #666; }
.viewer { display: flex; flex-direction: column; align-items: center; padding-top: 12px; }
.device { width: 341px; }
.hidden-opt { display: flex; align-items: center; gap: 1px; height: 17px; }
.tick { appearance: none; width: 12px; height: 12px; margin: 0 0 4px; background: linear-gradient(#f0f0f0, #ddd); border: 1px solid #999; border-radius: 2px; }
.tick.spaced { margin: 4px 0 0; }
.phone { border: 2px solid #9c0; background: #fff; }
.status { height: 28px; background: #000; display: flex; align-items: center; justify-content: flex-end; padding: 0 6px 2px; font-size: 16px; color: #33b5e5; }
.battery { margin: 0 6px 0 7px; }
.apptitle { height: 24px; line-height: 25px; padding-left: 12px; background: #666; color: #fff; font-weight: 700; }
.screen { display: flex; height: 428px; align-items: flex-start; border-top: 1px solid #ddd; }
.gamectl { flex: 1; margin-top: 5px; border: 2px solid #000; padding: 5px 0; display: flex; flex-direction: column; align-items: flex-start; gap: 5px; }
.btctl { border: 2px solid #000; padding: 2px; display: flex; font: 12px/16px "Noto Sans CJK TC", sans-serif; color: #000; }
.mock { height: 26px; padding: 0 8px; background: #e8e8e8; border: 1px solid #ccc; border-bottom: 2px solid #aaa; }
.mocklabel { padding: 5px 13px 0 9px; }
.gamescr { align-self: stretch; height: 304px; border: 2px solid #000; display: flex; align-items: center; justify-content: center; }
.strip { width: 17px; align-self: stretch; background: #cc9; }
.nonvis { padding-top: 9px; font-weight: 500; }
.nonvis-list { display: flex; gap: 10px; padding-top: 7px; }
.nonvis-list figure { display: flex; flex-direction: column; align-items: center; gap: 5px; }
.stack { display: flex; flex-direction: column; gap: 8px; }
.stack > :last-child { flex: 1; }
.tree { min-height: 490px; padding: 6px 13px; }
.tree ul { padding-left: 16px; }
.row { display: flex; align-items: flex-start; gap: 6px; }
.row.leaf { padding-left: 16px; }
.exp { width: 10px; height: 10px; margin-top: 7px; border: 1px solid #669; border-radius: 2px; background: linear-gradient(#339, #339) center / 6px 2px no-repeat #eef; }
.node { display: flex; gap: 2px; height: 26px; padding: 3px 5px 0 6px; line-height: 24px; }
.leaf .node { height: 25px; }
.sel { background: #cc9; }
.actions { display: flex; justify-content: center; gap: 4px; padding-bottom: 10px; }
.btn { height: 26px; padding: 0 7px; border: 1px solid #ccc; border-radius: 3px; background: #e8e8e8; color: #999; }
.upload { display: flex; justify-content: center; padding-top: 5px; }
.btn.white { background: #fff; color: #555; }
.target { height: 36px; line-height: 36px; padding: 0 10px; background: #e8e8e8; border-bottom: 1px solid #d5d5d5; }
.props { display: flex; flex-direction: column; gap: 15px; padding: 11px 9px; }
.prop { display: flex; flex-direction: column; align-items: flex-start; }
.prop label { padding-left: 2px; }
textarea, .field, select { font: inherit; color: inherit; margin: 0; background: #fff; border: 1px solid #bbb; border-radius: 4px; }
textarea { width: 171px; height: 30px; }
.field { width: 160px; height: 26px; padding: 0 6px; }
.pick { position: relative; display: flex; }
.pick::after { content: ""; position: absolute; right: 6px; top: 9px; border: 4px solid transparent; border-top: 6px solid #000; border-bottom: 0; }
select { appearance: none; width: 100%; height: 24px; padding: 0 10px; }
.w-s { width: 75px; } .w-m { width: 80px; } .w-l { width: 104px; } .w-xl { width: 122px; }
.color { height: 22px; margin-left: 2px; gap: 9px; align-items: flex-end; }
.color i { width: 11px; height: 18px; border: 1px solid #000; background: #fff; }
.scrollbar { width: 17px; display: flex; flex-direction: column; padding: 0 2px; background: #f1f1f1; }
.arrow { height: 17px; display: flex; align-items: center; justify-content: center; }
.arrow::before { content: ""; border: 4px solid transparent; }
.up::before { border-bottom-color: #444; border-top: 0; }
.down::before { border-top-color: #444; border-bottom: 0; }
.before { flex: 61; } .thumb { flex: 382; background: #c1c1c1; border: 1px solid #aaa; } .after { flex: 146; }
.toast { position: absolute; top: 2px; left: calc(50% - 9px); transform: translateX(-50%); padding: 0 16px; line-height: 29px; white-space: nowrap; font-size: 13px; font-weight: 500; color: #222; background: #fff; border: 1px solid #888; border-radius: 4px; box-shadow: 0 3px 2px #999678, 0 0 0 7px #cc9; clip-path: polygon(-1px -1px, 101% -1px, 101% 6px, 104% 6px, 104% 130%, -8px 130%, -8px 6px, -1px 6px); }

/* downloads */
.downloads { position: relative; height: 44px; flex: none; display: flex; align-items: center; gap: 2px; padding: 0 3px; background: #ddd; font: 12px/16px "Noto Sans", "Noto Sans CJK TC", sans-serif; color: #111; border-bottom: 1px solid #333; }
.dl { width: 206px; height: 38px; display: flex; background: linear-gradient(#eee, #dfdfdf); border: 1px solid #aaa; border-bottom-color: #888; border-radius: 3px; }
.file { flex: 1; justify-content: flex-start; padding-left: 9px; gap: 12px; }
.more { width: 14px; border-left: 1px solid #aaa; }
.more::before { content: ""; margin-bottom: 10px; border: 3px solid transparent; border-top-color: #555; border-bottom: 0; }
.showall { margin-left: auto; margin-right: 109px; display: flex; align-items: center; gap: 6px; }
.showall a { color: #222; text-decoration: underline; width: 12px; }
.clip { position: absolute; right: 2px; top: 4px; width: 112px; height: 37px; padding: 1px 2px; background: #fffdf0; border: 1px solid #555; border-width: 0 1px 1px 0; font: 12px/17px "Noto Sans", "Noto Sans CJK TC", sans-serif; white-space: nowrap; }
.clip div { display: flex; gap: 4px; }
.clip b { font-weight: 500; }

/* taskbar */
.taskbar { position: relative; z-index: 0; height: 40px; flex: none; display: flex; }
.start { width: 60px; padding-right: 6px; }
.apps { display: flex; gap: 4px; }
.app { position: relative; width: 58px; height: 40px; }
.run { border: 1px solid #223; border-radius: 3px; background: linear-gradient(150deg, #ffffff80, #ffffff20 50%, #ffffff10); box-shadow: inset 0 0 0 1px #ffffff60; }
.lit { background: linear-gradient(150deg, #fff, #ffffff60 60%); }
.stacked { width: 50px; margin-right: 8px; box-shadow: inset 0 0 0 1px #ffffff60, 4px 0 0 -1px #7a8fbd, 5px 0 0 -1px #223; }
.ps { width: 28px; height: 28px; background: #0a0050; border: 2px solid #7fc3f5; color: #a9dcff; font: 700 15px/23px "Open Sans", sans-serif; }
.en { width: 28px; height: 28px; border-radius: 50%; background: #2a1a1c; color: #f03a36; font: 700 18px/22px "Liberation Sans", sans-serif; }
.swoosh { position: absolute; left: 14px; bottom: 3px; }
.tray { margin-left: auto; margin-right: 15px; display: flex; align-items: center; gap: 8px; }
.time { width: 76px; display: flex; flex-direction: column; justify-content: center; align-items: center; font: 12px/18px "Noto Sans", "Noto Sans CJK TC", sans-serif; color: #fff; }
.desk { width: 22px; margin: 1px 1px 1px 5px; border: 1px solid #889; background: linear-gradient(150deg, #667, #445); }
```
